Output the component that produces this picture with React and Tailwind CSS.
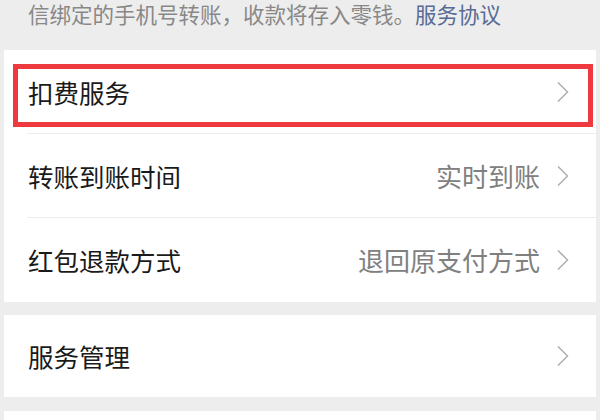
import { useState } from "react";

const font = { fontFamily: '"Noto Sans CJK SC", "Noto Sans", sans-serif' };

const Chevron = () => (
    <svg width="12" height="20" viewBox="0 0 12 20" className="shrink-0">
        <path d="M1.5 1 L10.5 10 L1.5 19" fill="none" stroke="#b3b3b3" strokeWidth="1.7" strokeLinecap="round" strokeLinejoin="round" />
    </svg>
);

const Row = ({ title, value, divider, highlight }) => (
    <div className="relative h-[84px] flex items-center pl-[24px] pr-[27px]">
        <span className="text-[25.5px] text-[#1a1a1a] leading-none flex-1">{title}</span>
        {value && <span className="text-[26px] text-[#808080] leading-none mr-[17px]">{value}</span>}
        <Chevron />
        {divider && <div className="absolute left-[23px] right-0 bottom-0 h-px bg-[#ececec]" />}
        {highlight && <div className="absolute left-[9px] top-[14px] w-[580px] h-[63px] border-[5px] border-[#ee3a3f]" />}
    </div>
);

export default function App() {
    const [items] = useState([
        { title: "扣费服务", value: "", highlight: true },
        { title: "转账到账时间", value: "实时到账" },
        { title: "红包退款方式", value: "退回原支付方式" },
    ]);
    return (
        <div className="w-[600px] h-[420px] overflow-hidden bg-[#ededed] px-[4px]" style={font}>
            <div className="h-[50px] pl-[24px] pt-[1px]">
                <p className="text-[21.5px] leading-[26px] text-[#888888] whitespace-nowrap">
                    信绑定的手机号转账，收款将存入零钱。<span className="text-[#576b95]">服务协议</span>
                </p>
            </div>
            <div className="bg-white">
                {items.map((item, i) => (
                    <Row key={item.title} {...item} divider={i < items.length - 1} />
                ))}
            </div>
            <div className="h-[13px]" />
            <div className="bg-white">
                <div className="h-[82px] flex items-center pl-[24px] pr-[27px]">
                    <span className="text-[25.5px] text-[#1a1a1a] leading-none flex-1">服务管理</span>
                    <Chevron />
                </div>
            </div>
            <div className="h-[14px]" />
            <div className="bg-white h-[40px]" />
        </div>
    );
}
